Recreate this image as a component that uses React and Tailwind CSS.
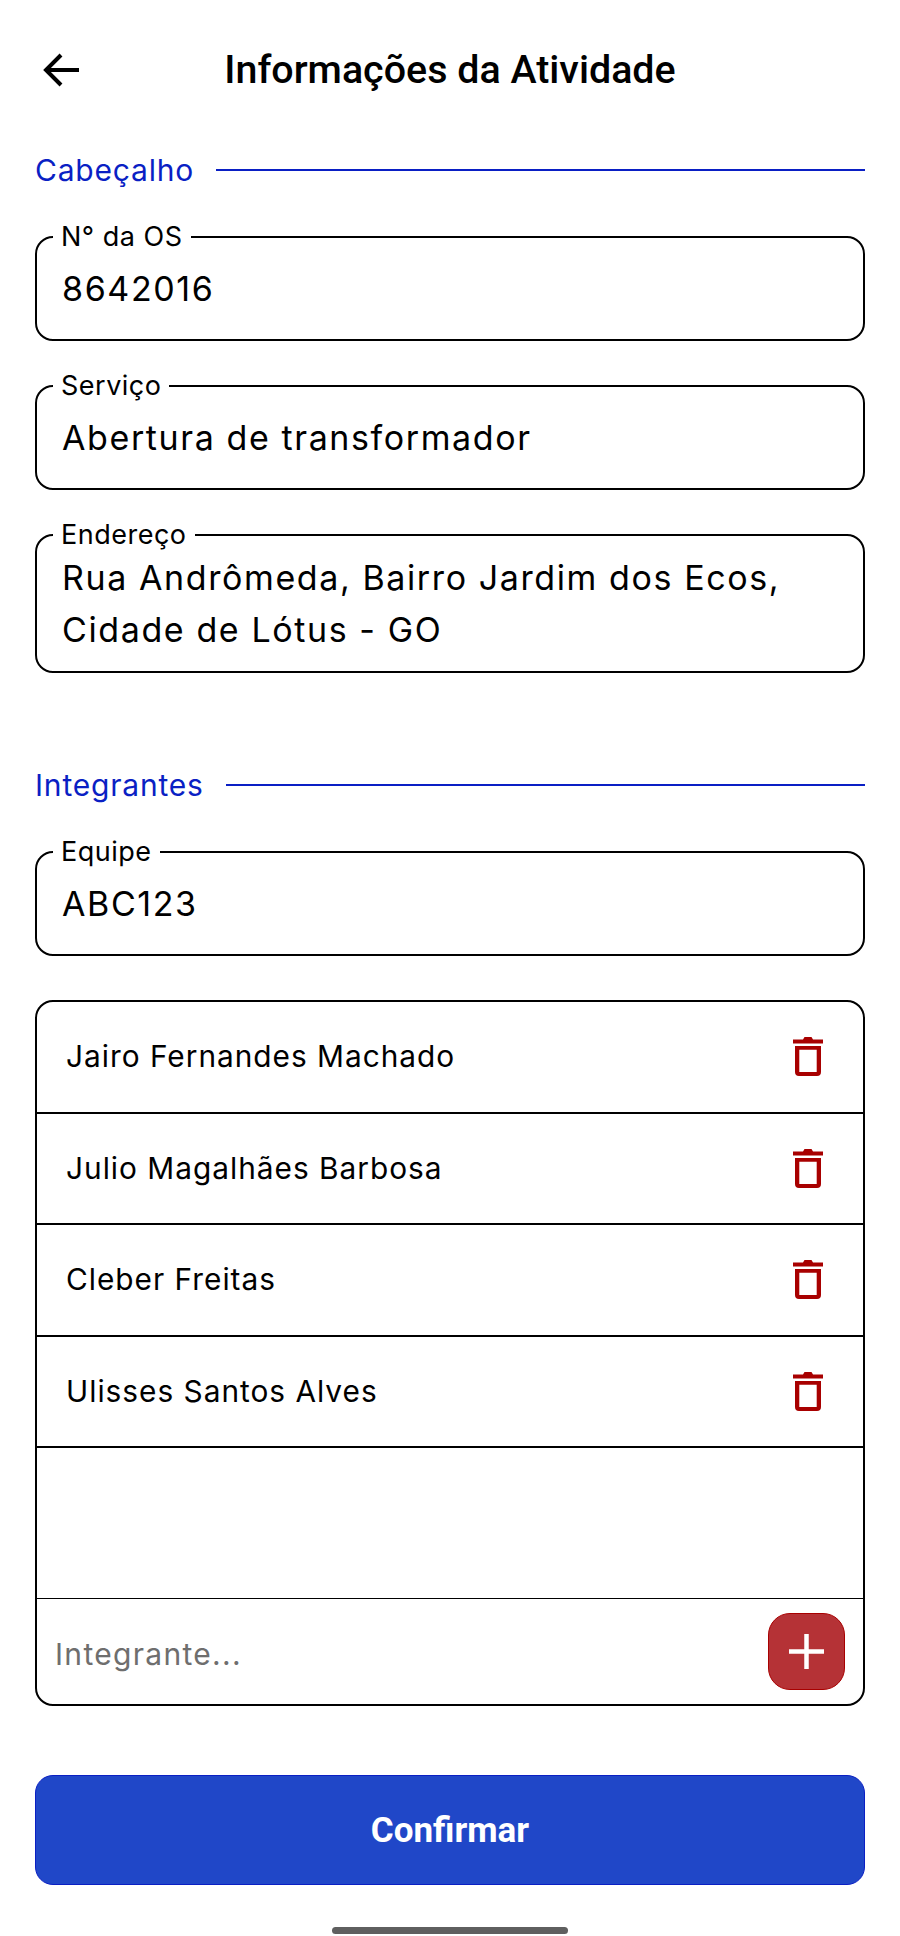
import React from "react";

const members = [
  "Jairo Fernandes Machado",
  "Julio Magalhães Barbosa",
  "Cleber Freitas",
  "Ulisses Santos Alves",
];

const ArrowBack = () => (
  <svg width="40" height="40" viewBox="0 0 40 40" fill="none" stroke="#000" strokeWidth="4">
    <path d="M39 20H7M21 5L6 20l15 15" />
  </svg>
);

const Trash = () => (
  <svg width="30" height="39" viewBox="0 0 30 39" fill="#a80000">
    <path d="M0 2.500h10L11.500 0h7L20 2.500h10v4H0z" />
    <path fillRule="evenodd" d="M2 9h26v26a4 4 0 0 1-4 4H6a4 4 0 0 1-4-4zm4.300 3.700V35h17.400V12.700z" />
  </svg>
);

const SectionTitle = ({ title }) => (
  <div className="flex items-center h-[60px]">
    <span className="text-[30px] leading-none tracking-[0.8px] text-[#0a1fc4] font-['Inter',sans-serif] mr-[22px]">{title}</span>
    <div className="flex-1 h-[2px] bg-[#0a1fc4]" />
  </div>
);

const Field = ({ label, children, className }) => (
  <div className={`relative border-2 border-black rounded-[18px] pl-[25px] pr-4 text-[34px] tracking-[1.600px] text-black ${className}`}>
    <span className="absolute left-[16px] -top-[17px] bg-white px-[8px] text-[27px] leading-[32px] tracking-[0.500px]">{label}</span>
    {children}
  </div>
);

export default function App() {
  return (
    <div className="w-[900px] h-[1936px] bg-white px-[35px] flex flex-col font-['Inter',sans-serif] relative">
      {/* Header */}
      <header className="h-[140px] shrink-0 flex items-center relative">
        <div className="absolute left-[5px] top-[50px]">
          <ArrowBack />
        </div>
        <h1 className="w-full text-center text-[39.400px] font-medium text-black font-['Roboto',sans-serif]">
          Informações da Atividade
        </h1>
      </header>

      <SectionTitle title="Cabeçalho" />
      <div className="flex flex-col gap-[44px] mt-[36px]">
        <Field label="N° da OS" className="h-[105px] flex items-center">8642016</Field>
        <Field label="Serviço" className="h-[105px] flex items-center">Abertura de transformador</Field>
        <Field label="Endereço" className="h-[139px] pt-[16px] leading-[52px]">
          Rua Andrômeda, Bairro Jardim dos Ecos,<br />Cidade de Lótus - GO
        </Field>
      </div>

      <div className="mt-[82px]">
        <SectionTitle title="Integrantes" />
      </div>
      <div className="mt-[36px]">
        <Field label="Equipe" className="h-[105px] flex items-center">ABC123</Field>
      </div>

      {/* Members list */}
      <div className="mt-[44px] h-[706px] border-2 border-black rounded-[18px] flex flex-col overflow-hidden">
        {members.map((name) => (
          <div key={name} className="h-[111.500px] shrink-0 border-b-2 border-black flex items-center justify-between pl-[29px] pr-[40px] text-[29.800px] tracking-[1px] text-black">
            <span>{name}</span>
            <Trash />
          </div>
        ))}
        <div className="flex-1 border-b border-black" />
        <div className="h-[105px] shrink-0 flex items-center justify-between px-[18px]">
          <span className="pt-[5px] text-[30px] tracking-[1.300px] text-[#6e6e6e]">Integrante...</span>
          <button className="w-[77px] h-[77px] rounded-[22px] bg-[#b53236] border border-[#a80000] flex items-center justify-center">
            <svg width="35" height="35" viewBox="0 0 35 35" fill="none" stroke="#fff" strokeWidth="4.500">
              <path d="M17.500 0v35M0 17.500h35" />
            </svg>
          </button>
        </div>
      </div>

      <button className="mt-[69px] h-[110px] shrink-0 rounded-[18px] bg-[#2047c8] border border-[#0a1fc4] pt-[3px] text-white text-[35px] font-bold font-['Roboto',sans-serif]">
        Confirmar
      </button>

      <div className="mt-[42px] mx-auto w-[236px] h-[7px] rounded-full bg-[#5f5f5f]" />
    </div>
  );
}
